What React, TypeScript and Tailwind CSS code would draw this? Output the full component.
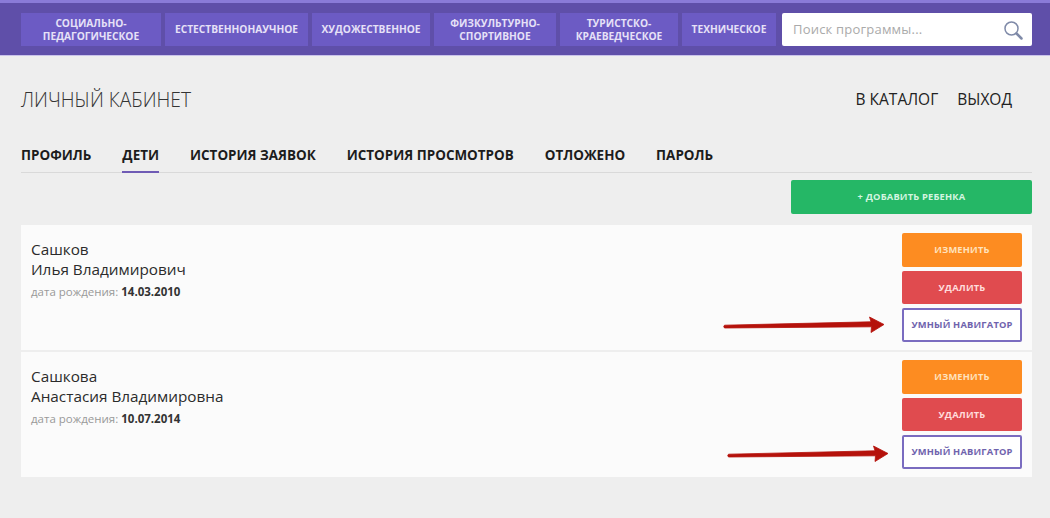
const categories = [
  { label: ["Социально-", "педагогическое"], width: "w-[140px]" },
  { label: ["Естественнонаучное"], width: "w-[143px]" },
  { label: ["Художественное"], width: "w-[118px]" },
  { label: ["Физкультурно-", "спортивное"], width: "w-[122px]" },
  { label: ["Туристско-", "краеведческое"], width: "w-[118px]" },
  { label: ["Техническое"], width: "w-[94px]" },
];

const tabs = ["Профиль", "Дети", "История заявок", "История просмотров", "Отложено", "Пароль"];

const children = [
  { last: "Сашков", first: "Илья Владимирович", born: "14.03.2010" },
  { last: "Сашкова", first: "Анастасия Владимировна", born: "10.07.2014" },
];

function Arrow({ className }: { className: string }) {
  return (
    <svg className={className} width="164" height="20" viewBox="0 0 164 20" fill="none">
      <path
        d="M1.5 9.2 L148 5.8 L146.5 1 L161 8.5 L148 16.5 L148.5 10.8 L1.5 12 Q0 10.6 1.5 9.2 Z"
        fill="#b5120b"
        stroke="#b5120b"
        strokeWidth="0.8"
        strokeLinejoin="round"
      />
    </svg>
  );
}

function ChildCard({ last, first, born, offset }: { last: string; first: string; born: string; offset: string }) {
  return (
    <div className="relative flex h-[125px] justify-between bg-[#fbfbfb] pl-[10px] pr-[10px] pt-[8px]">
      <div className="pt-[7px]">
        <div className="text-[15.3px] leading-[19px] text-[#2b2b2b]">{last}</div>
        <div className="text-[15.3px] leading-[20px] text-[#2b2b2b]">{first}</div>
        <div className="mt-[5px] text-[11.5px] leading-[16px] text-[#999]">
          дата рождения: <span className="font-bold text-[#333]">{born}</span>
        </div>
      </div>
      <div className="flex w-[120px] flex-col gap-[4px]">
        <button className="flex h-[33.5px] items-center justify-center rounded-[2px] bg-[#fd8c21] pt-[1px] text-[9.3px] font-bold uppercase tracking-[0.2px] text-[#ffe2bd]">
          Изменить
        </button>
        <button className="flex h-[33.5px] items-center justify-center rounded-[2px] bg-[#e04b4f] pt-[1px] text-[9.3px] font-bold uppercase tracking-[0.2px] text-[#ffdcdc]">
          Удалить
        </button>
        <button className="flex h-[34px] items-center justify-center rounded-[2px] border-2 border-[#7a6cc0] bg-white text-[9.3px] font-bold uppercase tracking-[0.2px] text-[#6f63ad]">
          Умный навигатор
        </button>
      </div>
      <Arrow className={offset} />
    </div>
  );
}

export default function App() {
  return (
    <div className="h-[518px] w-[1050px] overflow-hidden bg-[#eeeeee] font-['Open_Sans',sans-serif]">
      {/* Header */}
      <div className="flex h-[56px] items-start border-t-[3px] border-b border-t-[#8a7bd8] border-b-[#c9c2ea] bg-[#5f4fa9] pl-[21px] pt-[10px]">
        <div className="flex gap-[4px]">
          {categories.map((c) => (
            <div
              key={c.label[0]}
              className={`flex h-[33px] flex-col items-center justify-center bg-[#6c5bc4] text-[10.2px] font-bold uppercase leading-[13px] text-[#e6e1f7] ${c.width}`}
            >
              {c.label.map((line) => (
                <span key={line}>{line}</span>
              ))}
            </div>
          ))}
        </div>
        <div className="ml-[6px] flex h-[33px] w-[250px] items-center justify-between rounded-[2px] bg-white pl-[11px] pr-[9px]">
          <span className="text-[13px] tracking-[0.2px] text-[#aaaaaa]">Поиск программы...</span>
          <svg width="20" height="20" viewBox="0 0 20 20" fill="none" stroke="#7f8aa8" strokeWidth="1.5">
            <circle cx="8.5" cy="8.5" r="6.5" />
            <path d="M13.5 13.5 L18.5 18.5" strokeWidth="2.5" strokeLinecap="round" />
          </svg>
        </div>
      </div>

      <div className="mx-[21px] w-[1011px]">
        {/* Title row */}
        <div className="flex h-[88px] items-center justify-between">
          <div className="text-[19.2px] font-light uppercase text-[#333]">Личный кабинет</div>
          <div className="flex gap-[19px] pr-[20px] text-[15.5px] uppercase text-[#222]">
            <span>В каталог</span>
            <span>Выход</span>
          </div>
        </div>

        {/* Tabs */}
        <div className="flex h-[29px] gap-[31px] border-b border-[#d9d9d9] pt-[1px]">
          {tabs.map((tab) => (
            <div
              key={tab}
              className={`h-[28px] text-[13.45px] font-bold uppercase leading-[20px] text-[#1c1c1c] ${
                tab === "Дети" ? "border-b-2 border-[#6f5bb5]" : ""
              }`}
            >
              {tab}
            </div>
          ))}
        </div>

        <div className="mt-[7px] flex justify-end">
          <button className="h-[34px] w-[241px] rounded-[2px] bg-[#25b766] text-[9.3px] font-bold uppercase tracking-[0.2px] text-[#d3f5e0]">
            + Добавить ребенка
          </button>
        </div>

        <div className="mt-[11px] flex flex-col gap-[2px]">
          {children.map((c, i) => (
            <ChildCard
              key={c.last}
              last={c.last}
              born={c.born}
              first={c.first}
              offset={i === 0 ? "absolute left-[702px] top-[91px]" : "absolute left-[706px] top-[93px]"}
            />
          ))}
        </div>
      </div>
    </div>
  );
}
